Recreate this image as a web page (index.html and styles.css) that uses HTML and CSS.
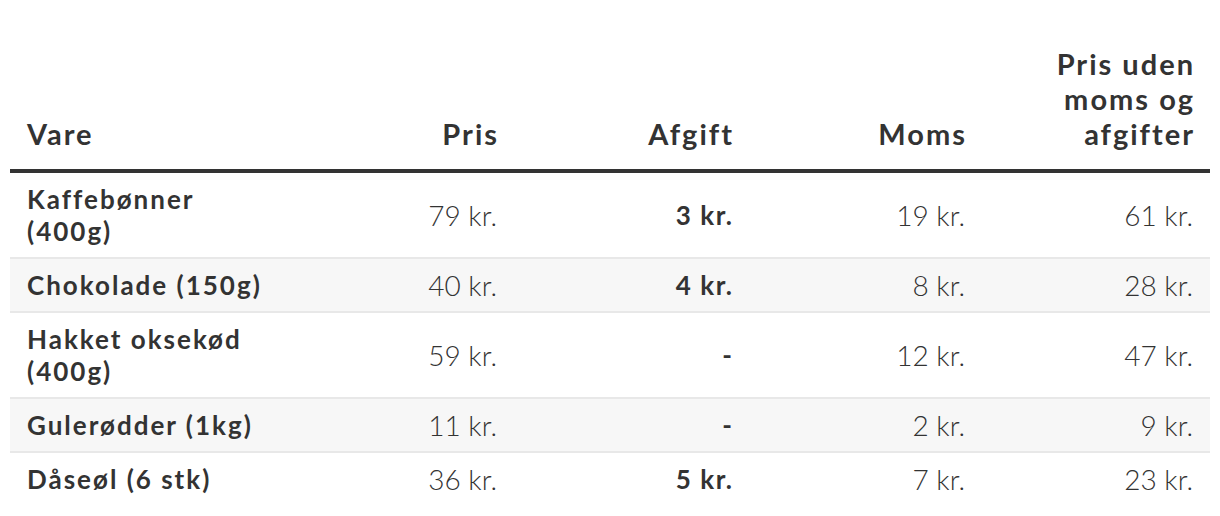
FILE: index.html
```html
<!DOCTYPE html>
<html lang="da">
<head>
<meta charset="utf-8">
<title>Priser</title>
<link rel="stylesheet" href="styles.css">
</head>
<body>
<table class="price-table">
  <colgroup>
    <col class="c-vare">
    <col class="c-pris">
    <col class="c-afgift">
    <col class="c-moms">
    <col class="c-uden">
  </colgroup>
  <thead>
    <tr>
      <th class="left">Vare</th>
      <th>Pris</th>
      <th>Afgift</th>
      <th>Moms</th>
      <th>Pris uden moms og afgifter</th>
    </tr>
  </thead>
  <tbody>
    <tr>
      <td class="name">Kaffebønner (400g)</td>
      <td>79 kr.</td>
      <td class="tax">3 kr.</td>
      <td>19 kr.</td>
      <td>61 kr.</td>
    </tr>
    <tr>
      <td class="name">Chokolade (150g)</td>
      <td>40 kr.</td>
      <td class="tax">4 kr.</td>
      <td>8 kr.</td>
      <td>28 kr.</td>
    </tr>
    <tr>
      <td class="name">Hakket oksekød (400g)</td>
      <td>59 kr.</td>
      <td class="tax">-</td>
      <td>12 kr.</td>
      <td>47 kr.</td>
    </tr>
    <tr>
      <td class="name">Gulerødder (1kg)</td>
      <td>11 kr.</td>
      <td class="tax">-</td>
      <td>2 kr.</td>
      <td>9 kr.</td>
    </tr>
    <tr>
      <td class="name">Dåseøl (6 stk)</td>
      <td>36 kr.</td>
      <td class="tax">5 kr.</td>
      <td>7 kr.</td>
      <td>23 kr.</td>
    </tr>
  </tbody>
</table>
</body>
</html>
```

FILE: styles.css
```css
html, body {
  margin: 0;
  padding: 0;
  background: #ffffff;
}

body {
  padding: 0 10px;
  font-family: "Lato", "Liberation Sans", sans-serif;
  color: #333333;
}

.price-table {
  width: 1200px;
  border-collapse: collapse;
  table-layout: fixed;
  margin-top: 46px;
}

.c-vare { width: 284px; }
.c-pris { width: 220px; }
.c-afgift { width: 235px; }
.c-moms { width: 233px; }
.c-uden { width: 228px; }

.price-table th {
  font-size: 29px;
  line-height: 35px;
  font-weight: 700;
  letter-spacing: 2px;
  text-align: right;
  vertical-align: bottom;
  padding: 0 15px 18px 17px;
  border-bottom: 4px solid #333333;
}

.price-table th.left {
  text-align: left;
}

.price-table td {
  font-size: 28px;
  line-height: 32px;
  font-weight: 300;
  text-align: right;
  vertical-align: middle;
  padding: 10px 17px;
  border-bottom: 2px solid #e8e8e8;
}

.price-table tbody tr:last-child td {
  border-bottom: none;
}

.price-table td.name {
  text-align: left;
  font-size: 26px;
  font-weight: 700;
  letter-spacing: 2px;
}

.price-table td.tax {
  font-size: 26px;
  font-weight: 700;
  letter-spacing: 1.5px;
  padding-right: 15.5px;
}

.price-table tbody tr:nth-child(even) td {
  background: #f7f7f7;
}
```
